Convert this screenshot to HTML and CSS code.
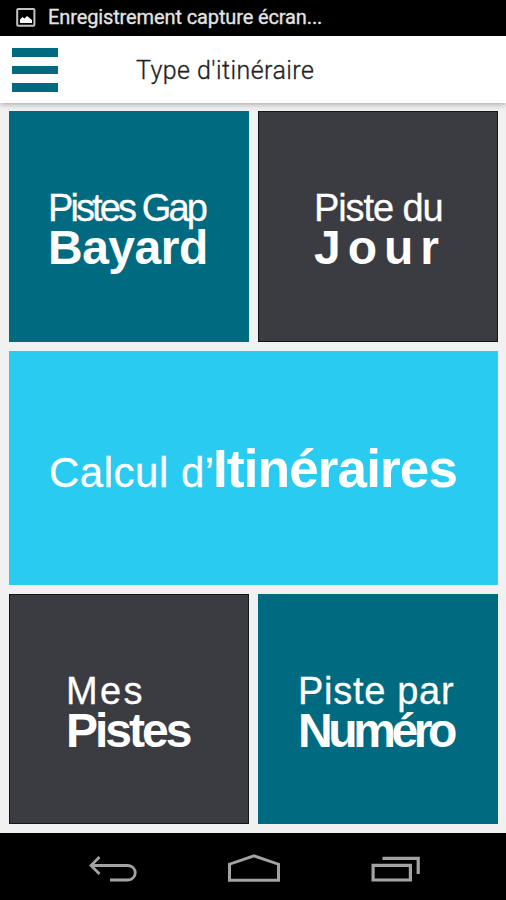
FILE: index.html
```html
<!DOCTYPE html>
<html lang="fr">

<head>
    <meta charset="UTF-8">
    <meta name="viewport" content="width=device-width, initial-scale=1.0">
    <title>Type d'itinéraire</title>
    <link rel="stylesheet" href="styles.css">
</head>

<body>
    <div class="status-bar">
        <svg class="status-icon" width="20" height="20" viewBox="0 0 20 20">
            <rect x="1.2" y="1.9" width="17.2" height="16.8" rx="1" fill="none" stroke="#c4c4c4" stroke-width="2" />
            <path d="M4 16V12.5L6.5 10L8.5 11.5L11 9L16 13V16Z" fill="#fff" />
        </svg>
        <span class="status-text">Enregistrement capture écran...</span>
    </div>

    <header class="header">
        <button class="menu" aria-label="Menu">
            <span></span>
            <span></span>
            <span></span>
        </button>
        <h1 class="title">Type d'itinéraire</h1>
    </header>

    <main class="tiles">
        <a class="tile teal gap-bayard">
            <span class="light">Pistes Gap</span>
            <span class="bold">Bayard</span>
        </a>
        <a class="tile dark jour">
            <span class="light">Piste du</span>
            <span class="bold">Jour</span>
        </a>
        <a class="tile blue calcul">
            <span class="light">Calcul d’</span><span class="bold">Itinéraires</span>
        </a>
        <a class="tile dark mes-pistes">
            <span class="light">Mes</span>
            <span class="bold">Pistes</span>
        </a>
        <a class="tile teal numero">
            <span class="light">Piste par</span>
            <span class="bold">Numéro</span>
        </a>
    </main>

    <nav class="nav-bar">
        <svg width="50" height="30" viewBox="0 0 50 30" fill="none" stroke="#a3a3a3" stroke-width="2.8">
            <path d="M3 11.5H40A7.2 7.2 0 0 1 40 26H22" />
            <path d="M11.5 3L3 11.5L11.5 20" />
        </svg>
        <svg width="54" height="30" viewBox="0 0 54 30" fill="none" stroke="#a3a3a3" stroke-width="3">
            <path d="M1.5 26.2V10.2L26 1.8L50.5 10.2V26.2Z" />
        </svg>
        <svg width="50" height="30" viewBox="0 0 50 30" fill="none" stroke="#a3a3a3" stroke-width="3.2">
            <path d="M2.1 11.3H39.4V26H2.1Z" />
            <path d="M11.5 4.4H47.2V20" />
        </svg>
    </nav>
</body>

</html>
```
FILE: styles.css
```css
* {
    margin: 0;
    padding: 0;
    box-sizing: border-box;
}

body {
    display: flex;
    flex-direction: column;
    width: 506px;
    height: 900px;
    overflow: hidden;
    background: #f1f1f1;
    font-family: "Liberation Sans", Arial, sans-serif;
}

/* barre de statut */
.status-bar {
    display: flex;
    height: 36px;
    padding: 7px 0 0 16px;
    background: #000;
}

.status-icon {
    flex: none;
}

.status-text {
    margin-left: 12px;
    color: #e4e4e4;
    font-family: Roboto, sans-serif;
    font-size: 20px;
    line-height: 20px;
    letter-spacing: -0.12px;
    white-space: nowrap;
    -webkit-text-stroke: 0.3px #e4e4e4;
}

/* en-tête */
.header {
    display: flex;
    height: 67px;
    padding-left: 12px;
    background: #fff;
    box-shadow: 0 1px 6px rgba(0, 0, 0, 0.35);
}

.menu {
    display: flex;
    flex-direction: column;
    gap: 9px;
    width: 46px;
    padding-top: 12px;
    border: 0;
    background: none;
}

.menu span {
    width: 46px;
    height: 8.7px;
    background: #006b80;
}

.title {
    margin-left: 78px;
    color: #222;
    font-family: Roboto, sans-serif;
    font-size: 25px;
    font-weight: 300;
    line-height: 70px;
    letter-spacing: 0.43px;
    -webkit-text-stroke: 0.3px #222;
}

/* tuiles */
.tiles {
    display: grid;
    grid-template-columns: 240px 240px;
    grid-template-rows: 231px 234px 230px;
    gap: 9px;
    height: 730px;
    padding: 8px 8px 0 9px;
}

.tile {
    display: flex;
    flex-direction: column;
    padding-top: 77px;
    color: #fff;
    white-space: nowrap;
}

.teal {
    background: #006b80;
}

.dark {
    background: #3b3b42;
    border: 1px solid #15151c;
    padding-top: 76px;
}

.blue {
    background: #29ccf0;
}

.light {
    font-size: 38px;
    line-height: 40px;
    -webkit-text-stroke: 0.3px #fff;
}

.bold {
    font-size: 48px;
    font-weight: bold;
    line-height: 40px;
}

.gap-bayard {
    padding-left: 39px;
}

.gap-bayard .light {
    letter-spacing: -2.9px;
}

.gap-bayard .bold {
    letter-spacing: -0.5px;
}

.jour {
    padding-left: 55px;
}

.jour .light {
    letter-spacing: -1.1px;
}

.jour .bold {
    letter-spacing: 7px;
}

.calcul {
    grid-column: span 2;
    flex-direction: row;
    align-items: baseline;
    padding: 98px 0 0 40px;
}

.calcul .light {
    font-size: 42px;
    letter-spacing: 0.5px;
}

.calcul .bold {
    margin-left: -1.5px;
    font-size: 53px;
    letter-spacing: -0.85px;
}

.mes-pistes {
    padding-left: 56px;
}

.mes-pistes .light {
    letter-spacing: 2.4px;
}

.mes-pistes .bold {
    letter-spacing: -3px;
}

.numero {
    padding-left: 40px;
}

.numero .light {
    letter-spacing: 0.7px;
}

.numero .bold {
    letter-spacing: -4.4px;
}

/* boutons système */
.nav-bar {
    display: flex;
    justify-content: space-between;
    height: 67px;
    padding: 21px 85px 0 88px;
    background: #000;
}
```
